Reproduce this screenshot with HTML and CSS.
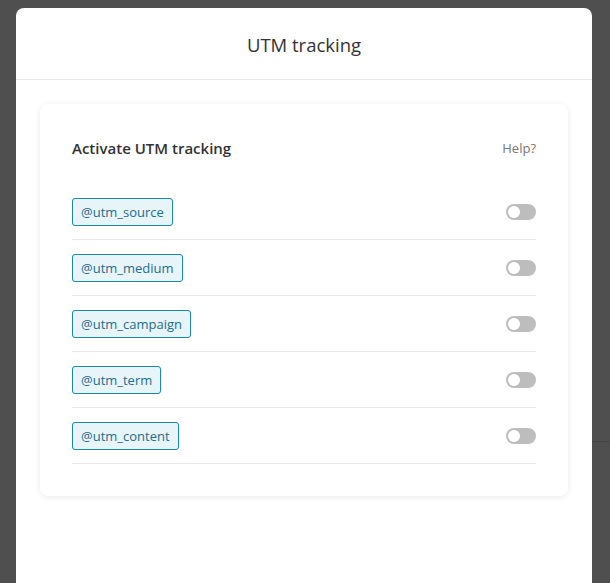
FILE: index.html
```html
<!DOCTYPE html>
<html lang="en">
<head>
<meta charset="utf-8">
<title>UTM tracking</title>
<link rel="stylesheet" href="styles.css">
</head>
<body>
<div class="backdrop-line"></div>
<div class="modal">
  <div class="modal-header">UTM tracking</div>
  <div class="modal-body">
    <div class="card">
      <div class="card-head">
        <span class="card-title">Activate UTM tracking</span>
        <a class="help">Help?</a>
      </div>
      <div class="row"><span class="tag">@utm_source</span><span class="toggle"><span class="knob"></span></span></div>
      <div class="row"><span class="tag">@utm_medium</span><span class="toggle"><span class="knob"></span></span></div>
      <div class="row"><span class="tag">@utm_campaign</span><span class="toggle"><span class="knob"></span></span></div>
      <div class="row"><span class="tag">@utm_term</span><span class="toggle"><span class="knob"></span></span></div>
      <div class="row"><span class="tag">@utm_content</span><span class="toggle"><span class="knob"></span></span></div>
    </div>
  </div>
</div>
</body>
</html>
```
FILE: styles.css
```css
html, body {
  margin: 0;
  padding: 0;
  height: 100%;
  overflow: hidden;
}
body {
  background: #4f4f4f;
  font-family: "Open Sans", "Noto Sans", "Liberation Sans", sans-serif;
  position: relative;
}
.backdrop-line {
  position: absolute;
  left: 592px;
  right: 0;
  top: 441px;
  height: 1px;
  background: #464646;
}
.modal {
  position: relative;
  margin: 8px 0 0 16px;
  width: 576px;
  min-height: 620px;
  background: #fff;
  border-radius: 8px 8px 0 0;
}
.modal-header {
  height: 72px;
  box-sizing: border-box;
  padding-top: 2px;
  border-bottom: 1px solid #e9e9e9;
  display: flex;
  align-items: center;
  justify-content: center;
  font-size: 18.5px;
  color: #333;
}
.modal-body {
  padding: 24px;
}
.card {
  background: #fff;
  border-radius: 8px;
  box-shadow: 0 1px 6px rgba(0, 0, 0, 0.09);
  padding: 32px;
}
.card-head {
  display: flex;
  justify-content: space-between;
  align-items: center;
  height: 24px;
  margin-bottom: 24px;
}
.card-title {
  font-size: 15px;
  font-weight: 600;
  color: #333;
}
.help {
  font-size: 13px;
  color: #777;
}
.row {
  display: flex;
  justify-content: space-between;
  align-items: center;
  height: 55px;
  border-bottom: 1px solid #e9e9e9;
}
.tag {
  display: inline-flex;
  align-items: center;
  height: 28px;
  box-sizing: border-box;
  padding: 0 8px;
  border: 1px solid #1a87ad;
  border-radius: 3px;
  background: #e7f4f8;
  color: #1d6e8c;
  font-size: 13px;
}
.toggle {
  width: 30px;
  height: 16px;
  border-radius: 8px;
  background: #bdbdbd;
  display: flex;
  align-items: center;
  padding: 0 2px;
  box-sizing: border-box;
  margin-top: 1px;
}
.knob {
  width: 12px;
  height: 12px;
  border-radius: 50%;
  background: #fff;
}
```
